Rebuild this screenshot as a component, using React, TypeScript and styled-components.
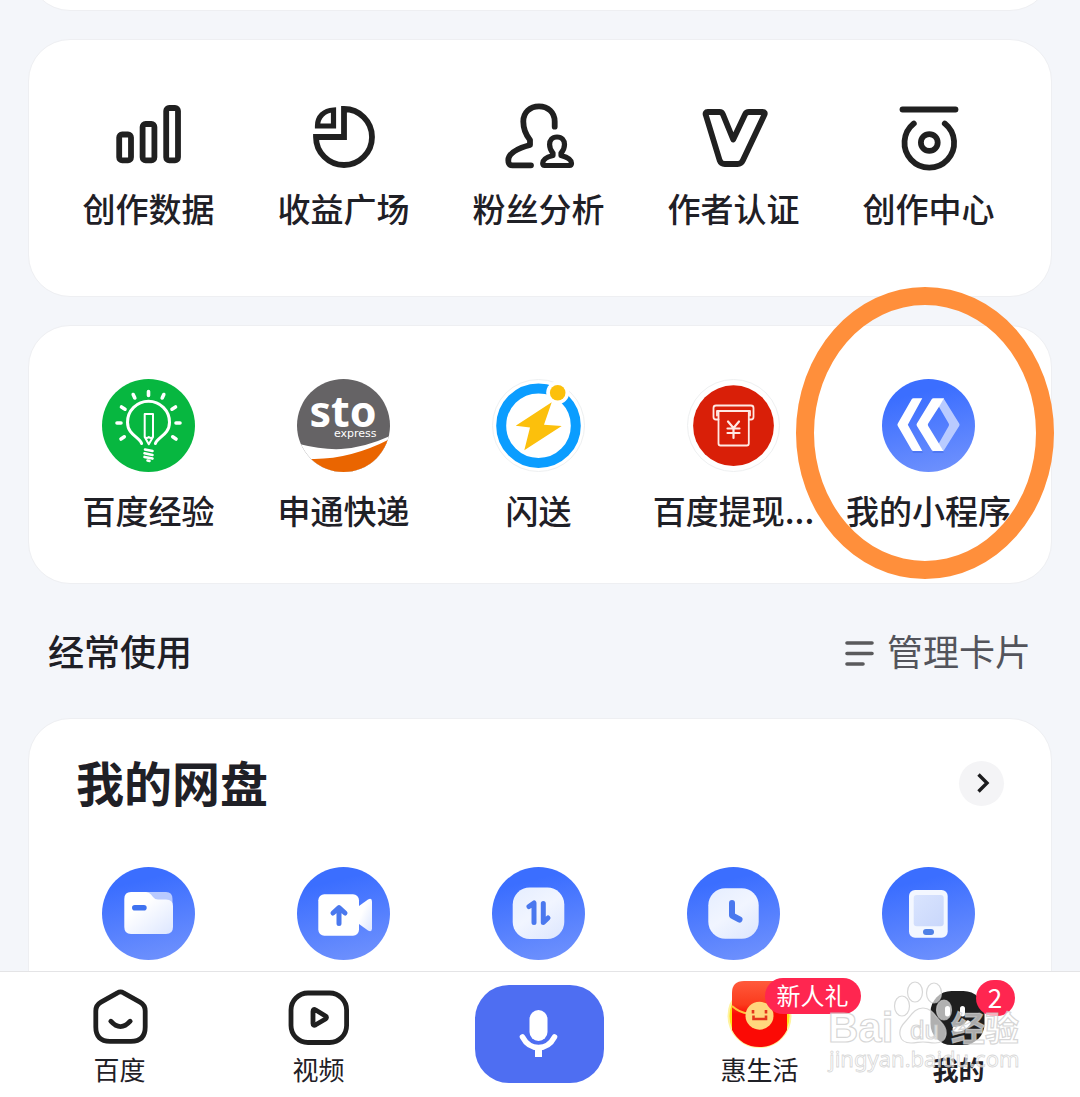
import React from "react";
import styled, { createGlobalStyle, css } from "styled-components";

const ink = "#1f2026";

const GlobalStyle = createGlobalStyle`
  * { box-sizing: border-box; }
  body {
    margin: 0;
    background: #f4f6fa;
    color: ${ink};
    font-family: "Noto Sans CJK SC", "Noto Sans", sans-serif;
  }
  button { font: inherit; color: inherit; border: 0; padding: 0; background: none; cursor: pointer; }
  a { color: inherit; text-decoration: none; }
  h2, h3 { margin: 0; }
  svg { display: block; overflow: visible; }
`;

const Screen = styled.div`
  display: flex;
  flex-direction: column;
  height: 100vh;
  overflow: hidden;
`;

const Feed = styled.main`
  flex: 1;
  min-height: 0;
  overflow: hidden;
  padding: 0 28px;
`;

const Card = styled.section<{ $pad?: string }>`
  background: #fff;
  border: 1px solid #eeeff2;
  border-radius: 42px;
  padding: ${(p) => p.$pad ?? "0"};
  margin-bottom: 28px;
`;

const ScrolledCard = styled(Card)`
  height: 100px;
  margin-top: -89px;
`;

const Grid = styled.div`
  display: grid;
  grid-template-columns: repeat(5, minmax(0, 1fr));
  padding: 0 25px 0 22px;
`;

const AppLink = styled.a<{ $gap: number }>`
  position: relative;
  display: flex;
  flex-direction: column;
  align-items: center;
  gap: ${(p) => p.$gap}px;
`;

const AppName = styled.span`
  font-size: 33px;
  line-height: 48px;
  font-weight: 500;
  white-space: nowrap;
`;

const Ring = styled.span`
  position: absolute;
  z-index: 2;
  top: -92px;
  left: calc(50% - 133px);
  width: 258px;
  height: 292px;
  border: 18px solid #ff8f3b;
  border-radius: 50%;
  pointer-events: none;
`;

const SectionBar = styled.header`
  display: flex;
  align-items: center;
  justify-content: space-between;
  height: 134px;
  margin-top: -28px;
  padding: 0 21px 2px 20px;
`;

const SectionTitle = styled.h2`
  font-size: 36px;
  line-height: 52px;
  font-weight: 500;
`;

const ManageButton = styled.button`
  display: flex;
  align-items: center;
  gap: 13px;
  font-size: 36px;
  line-height: 52px;
  color: #53545b;
`;

const DiskHead = styled.div`
  display: flex;
  align-items: center;
  justify-content: space-between;
  padding: 27px 47px 47px;
`;

const DiskTitle = styled.h3`
  padding-bottom: 4px;
  font-size: 48px;
  line-height: 70px;
  font-weight: 700;
`;

const MoreButton = styled.button`
  display: grid;
  place-items: center;
  width: 45px;
  height: 45px;
  border-radius: 50%;
  background: #f4f4f6;
`;

const TabBar = styled.nav`
  position: relative;
  display: grid;
  grid-template-columns: 1fr 1fr 242px 1fr 1fr;
  padding: 16px 22px 10px 20px;
  background: #fff;
  border-top: 1px solid #e4e4e6;
`;

const Tab = styled.a<{ $active?: boolean }>`
  display: flex;
  flex-direction: column;
  align-items: center;
  gap: 3px;
  font-size: 26px;
  line-height: 36px;
  ${(p) => p.$active && css`font-weight: 700;`}
`;

const TabIcon = styled.span`
  position: relative;
  width: 64px;
  height: 60px;
`;

const Badge = styled.span<{ $left: number; $top: number; $wide?: boolean }>`
  position: absolute;
  left: ${(p) => p.$left}px;
  top: ${(p) => p.$top}px;
  min-width: ${(p) => (p.$wide ? 96 : 39)}px;
  height: 36px;
  border-radius: 18px;
  background: #ff2650;
  color: #fff;
  font-size: ${(p) => (p.$wide ? 24 : 26)}px;
  line-height: 34px;
  font-weight: 400;
  text-align: center;
  white-space: nowrap;
`;

const VoiceButton = styled.button`
  justify-self: center;
  display: grid;
  place-items: center;
  width: 129px;
  height: 98px;
  margin-top: -3px;
  border-radius: 34px;
  background: #4e6ef2;
`;

const Watermark = styled.svg`
  position: absolute;
  right: 56px;
  bottom: 22px;
  pointer-events: none;
`;

const Line = ({ children }: { children: React.ReactNode }) => (
  <svg width="80" height="80" viewBox="0 0 80 80" fill="none" stroke="#202020" strokeWidth="5.8" strokeLinecap="round" aria-hidden="true">
    {children}
  </svg>
);

const Disc = ({ children, fill }: { children: React.ReactNode; fill: string }) => (
  <svg width="93" height="93" viewBox="0 0 93 93" fill="none" aria-hidden="true">
    <circle cx="46.5" cy="46.5" r="46.5" fill={fill} />
    {children}
  </svg>
);

const BLUE = "url(#discBlue)";
const SHEET = "url(#sheet)";

const Gradients = () => (
  <svg width="0" height="0" style={{ position: "absolute" }} aria-hidden="true">
    <defs>
      <linearGradient id="discBlue" x1="0.35" y1="0" x2="0.6" y2="1">
        <stop offset="0.15" stopColor="#3b6eff" />
        <stop offset="1" stopColor="#6d90fd" />
      </linearGradient>
      <linearGradient id="sheet" x1="0.1" y1="0" x2="1" y2="1">
        <stop offset="0.3" stopColor="#fff" />
        <stop offset="1" stopColor="#dce6ff" />
      </linearGradient>
      <linearGradient id="tile" x1="0.1" y1="0" x2="0.8" y2="1">
        <stop offset="0" stopColor="#e6eeff" />
        <stop offset="0.5" stopColor="#f1f5ff" />
        <stop offset="1" stopColor="#dfe8fe" />
      </linearGradient>
      <linearGradient id="screen" x1="0" y1="0" x2="1" y2="1">
        <stop offset="0" stopColor="#d9e4fe" />
        <stop offset="1" stopColor="#c9d7fb" />
      </linearGradient>
      <linearGradient id="packet" x1="0" y1="0" x2="0" y2="1">
        <stop offset="0" stopColor="#ff5a3c" />
        <stop offset="0.36" stopColor="#fb3a1c" />
        <stop offset="0.5" stopColor="#fb0a05" />
      </linearGradient>
      <clipPath id="round"><circle cx="46.5" cy="46.5" r="46.5" /></clipPath>
    </defs>
  </svg>
);

const tools = [
  {
    name: "创作数据",
    icon: (
      <Line>
        <rect x="10.2" y="36.5" width="11.8" height="25.8" rx="3" />
        <rect x="33.6" y="26" width="11.8" height="36.3" rx="3" />
        <rect x="57.2" y="10" width="11.8" height="52.3" rx="3" />
      </Line>
    ),
  },
  {
    name: "收益广场",
    icon: (
      <Line>
        <path strokeLinecap="butt" d="M40 11V39H12A28 28 0 1 0 40 11Z" />
        <path strokeLinecap="butt" strokeWidth="5.2" d="M29.5 12V28H13.5C13.5 19 20 12.2 29.5 12Z" />
      </Line>
    ),
  },
  {
    name: "粉丝分析",
    icon: (
      <Line>
        <path strokeLinejoin="round" d="M55.7 28.7V23.5C55.7 14.5 49 8.3 40 8.3S24.3 14.5 24.3 23.5C24.3 31 27 37 31 42V47C20 50 9.3 54.5 9.3 62.3C9.3 66 10.3 67.3 13.5 67.3H32" />
        <path strokeLinejoin="round" strokeWidth="5.2" d="M58 39C53 39 50.6 42.500 50.6 46.5C50.6 50 51.8 52.8 54 55V57.5C48 59 43.7 61.5 43.7 65.3C43.7 67 44.4 67.500 45.700 67.500H70.500C71.800 67.500 72.500 67 72.500 65.300C72.500 61.500 68 59 62 57.500V55C64.200 52.800 65.500 50 65.500 46.500C65.500 42.500 63 39 58 39Z" />
      </Line>
    ),
  },
  {
    name: "作者认证",
    icon: (
      <Line>
        <path strokeLinejoin="round" d="M13.800 14H25.500Q28 14 29 16.500L39.200 41.500L51 16.500Q52.200 14 55 14H68.500Q71.800 14 70.300 17L48.800 62.500Q47.200 66 43.500 66H30.800Q27 66 25.700 62.500L11.800 17Q10.800 14 13.800 14Z" />
      </Line>
    ),
  },
  {
    name: "创作中心",
    icon: (
      <Line>
        <path d="M13.500 11.500H66.500" />
        <path d="M24.800 25.500A24.800 24.800 0 1 0 55.800 25.500" />
        <circle cx="40.300" cy="44.500" r="8.400" />
      </Line>
    ),
  },
];

const apps = [
  {
    name: "百度经验",
    icon: (
      <Disc fill="#07b740">
        <g stroke="#fff" strokeLinecap="round">
          <path strokeWidth="3" d="M39.600 64.500C37.500 58 25.500 56 25.500 43.200A21 21 0 0 1 67.500 43.200C67.500 56 55.500 58 53.400 64.500" />
          <path strokeWidth="3.600" d="M46.500 12.500V16.500M31.200 15.500L32.800 19M61.800 15.500L60.200 19M19.500 28L23 30.200M73.500 28L70 30.200M15 44H19M74 44H78M19 60L22.300 57.800M74 60L70.700 57.800" />
          <path strokeWidth="2" strokeLinejoin="round" d="M42.700 35H51V58L46.800 65.300L42.700 58ZM42.700 58Q44.800 60 46.800 58Q49 60 51 58" />
          <path strokeWidth="2.600" d="M43 70.500L50.500 72M42.500 74.200L50.500 75.900M42.500 77.900L50.500 79.600M45.500 81.600L47.500 82" />
        </g>
      </Disc>
    ),
  },
  {
    name: "申通快递",
    icon: (
      <Disc fill="#656365">
        <g clipPath="url(#round)">
          <path fill="#fff" d="M0 64.500Q26 71 44 70Q68 68.500 93 57V93H0Z" />
          <path fill="#ea6500" d="M10 79.700Q50 82 93 60V93H10Z" />
        </g>
        <text x="12.500" y="48" fontFamily="Noto Sans, sans-serif" fontWeight="700" fontSize="43" fill="#fff">sto</text>
        <text x="37" y="58" fontFamily="DejaVu Sans, sans-serif" fontSize="11" fill="#fff">express</text>
      </Disc>
    ),
  },
  {
    name: "闪送",
    icon: (
      <Disc fill="#fff">
        <circle cx="46.500" cy="46.500" r="46" stroke="#eef0f1" />
        <circle cx="46.500" cy="46.700" r="37.300" stroke="#0b9dff" strokeWidth="10" />
        <circle cx="65.700" cy="13.700" r="11.500" fill="#fff" />
        <circle cx="65.700" cy="13.700" r="7.800" fill="#fcc00c" />
        <path fill="#fcc00c" d="M59.700 23.300L23.700 46.700L38 48.500L32.300 71.300L69.700 47L52 45.800Z" />
      </Disc>
    ),
  },
  {
    name: "百度提现...",
    icon: (
      <Disc fill="#fff">
        <circle cx="46.500" cy="46.500" r="46" stroke="#eef0f1" />
        <circle cx="46.500" cy="46.700" r="40.400" fill="#d91f08" />
        <g stroke="#ffe9e4" strokeWidth="1.800" strokeLinejoin="round" strokeLinecap="round">
          <path d="M31.500 40.500H29Q26.500 40.500 26.500 38V29Q26.500 26.500 29 26.500H64Q66.500 26.500 66.500 29V38Q66.500 40.500 64 40.500H61.800" />
          <path d="M30 36.500V32H63V36.500" />
          <path d="M31.500 33V64.500Q31.500 66.500 33.500 66.500H59.800Q61.800 66.500 61.800 64.500V33" />
          <path strokeWidth="2.200" d="M41 42.500L46.500 49L52 42.500M46.500 49V59M40.500 49.500H52.500M40.500 54H52.500" />
        </g>
      </Disc>
    ),
  },
  {
    name: "我的小程序",
    marked: true,
    icon: (
      <Disc fill={BLUE}>
        <path fill="#2f5de0" fillOpacity="0.35" d="M31 74H41L38 68L28 66ZM50 74H62L57 67Z" />
        <path fill="#fff" d="M31.500 19.300H40.300L25.800 45.700L40.300 72H31.500Q30.300 72 29.700 71L15.800 47Q15 45.700 15.800 44.400L29.700 20.300Q30.300 19.300 31.500 19.300Z" />
        <path fill="#b9cbff" d="M61.500 19.300L77.200 44.400Q78 45.700 77.200 47L61.500 72L56.500 65L66.700 47Q67.400 45.700 66.700 44.400L56.500 27Z" />
        <path fill="#fff" d="M51.500 19.300H62L57.500 27L46.200 44.400Q45.400 45.700 46.200 47L61.500 72H51.500Q50.300 72 49.700 71L34.900 47Q34.100 45.700 34.900 44.400L49.700 20.300Q50.300 19.300 51.500 19.300Z" />
      </Disc>
    ),
  },
];

const diskTools = [
  {
    name: "文件",
    icon: (
      <Disc fill={BLUE}>
        <path fill="#b9caff" d="M44 25H64Q70.500 25 70.500 32V42H44Z" />
        <path fill={SHEET} d="M29 25H44Q47 25 49 27.500L51 30Q53 32.500 56 32.500H64Q71 32.500 71 39V60Q71 67 64 67H29Q22.300 67 22.300 60V32Q22.300 25 29 25Z" />
        <rect x="30" y="38" width="14.700" height="5.600" rx="2.800" fill="#3f72f0" />
      </Disc>
    ),
  },
  {
    name: "上传视频",
    icon: (
      <Disc fill={BLUE}>
        <path fill={SHEET} d="M62 39L71 32.500Q75 30.500 75 34.500V61.500Q75 65.500 71 63.500L62 57Z" />
        <rect x="21.300" y="27.300" width="40.700" height="41.400" rx="6" fill="#fff" />
        <path stroke="#4a78ee" strokeWidth="5" strokeLinecap="round" strokeLinejoin="round" d="M42 56.500V41.500M36 46L42 40.500L48 46" />
      </Disc>
    ),
  },
  {
    name: "传输",
    icon: (
      <Disc fill={BLUE}>
        <rect x="20.700" y="20.500" width="51.600" height="51.600" rx="17" fill="url(#tile)" />
        <path stroke="#4a78ee" strokeWidth="5" strokeLinecap="round" strokeLinejoin="round" d="M37 39.500L42 36V55.500M51.300 36.500V55.500L56 51" />
      </Disc>
    ),
  },
  {
    name: "最近",
    icon: (
      <Disc fill={BLUE}>
        <rect x="21.300" y="21.300" width="50.400" height="50.400" rx="17" fill="url(#tile)" />
        <path stroke="#4a78ee" strokeWidth="6" strokeLinecap="round" strokeLinejoin="round" d="M45 36V48.500L52.500 52.500" />
      </Disc>
    ),
  },
  {
    name: "手机备份",
    icon: (
      <Disc fill={BLUE}>
        <rect x="27" y="23" width="38.700" height="47.700" rx="6" fill="#f3f7ff" />
        <rect x="31.700" y="28" width="30" height="31.300" rx="3" fill="url(#screen)" />
        <rect x="41" y="62" width="11" height="6" rx="3" fill="#4f80e6" />
      </Disc>
    ),
  },
];

export default function App() {
  return (
    <Screen>
      <GlobalStyle />
      <Gradients />
      <Feed>
        <ScrolledCard />
        <Card $pad="58px 0 64px">
          <Grid>
            {tools.map((t) => (
              <AppLink href="#" key={t.name} $gap={6}>
                {t.icon}
                <AppName>{t.name}</AppName>
              </AppLink>
            ))}
          </Grid>
        </Card>
        <Card $pad="53px 0 49px">
          <Grid>
            {apps.map((a) => (
              <AppLink href="#" key={a.name} $gap={14}>
                {a.icon}
                <AppName>{a.name}</AppName>
                {a.marked && <Ring />}
              </AppLink>
            ))}
          </Grid>
        </Card>
        <SectionBar>
          <SectionTitle>经常使用</SectionTitle>
          <ManageButton>
            <svg width="29" height="36" viewBox="0 -8 29 36" stroke="#5a5a5c" strokeWidth="3.600" strokeLinecap="round" aria-hidden="true">
              <path d="M2 3H27M2 13.500H27M2 24H18" />
            </svg>
            管理卡片
          </ManageButton>
        </SectionBar>
        <Card $pad="0 0 60px">
          <DiskHead>
            <DiskTitle>我的网盘</DiskTitle>
            <MoreButton aria-label="更多">
              <svg width="20" height="24" viewBox="0 0 20 24" fill="none" stroke="#1c1c1e" strokeWidth="3.400" aria-hidden="true">
                <path d="M6.500 3.500L15 12L6.500 20.500" />
              </svg>
            </MoreButton>
          </DiskHead>
          <Grid>
            {diskTools.map((d) => (
              <AppLink href="#" key={d.name} aria-label={d.name} $gap={0}>
                {d.icon}
              </AppLink>
            ))}
          </Grid>
        </Card>
      </Feed>

      <TabBar>
        <Tab href="#">
          <TabIcon>
            <svg width="64" height="60" viewBox="0 0 64 60" fill="none" stroke="#1f1f1f" strokeWidth="4.800" strokeLinecap="round" strokeLinejoin="round" aria-hidden="true">
              <path d="M29.500 4.800Q32.500 3 35.500 4.800L52 14.200Q57.200 17.200 57.200 23V39Q57.200 53.300 43 53.300H22Q7.800 53.300 7.800 39V23Q7.800 17.200 13 14.200Z" />
              <path d="M22.800 33.200Q32.500 44 42.200 33.200" />
            </svg>
          </TabIcon>
          百度
        </Tab>
        <Tab href="#">
          <TabIcon>
            <svg width="64" height="60" viewBox="0 0 64 60" fill="none" stroke="#1f1f1f" strokeWidth="4.800" strokeLinejoin="round" aria-hidden="true">
              <rect x="4" y="5" width="55.600" height="49.500" rx="17" />
              <path d="M26 23.500Q26 20.500 28.700 22L38.500 28Q40.500 29.500 38.500 31L28.700 36.800Q26 38.200 26 35.500Z" />
            </svg>
          </TabIcon>
          视频
        </Tab>
        <VoiceButton aria-label="语音搜索">
          <svg width="40" height="50" viewBox="0 0 40 50" fill="none" stroke="#fff" strokeWidth="5.600" strokeLinecap="round" aria-hidden="true">
            <rect x="10.500" y="1" width="18" height="31" rx="9" fill="#fff" stroke="none" />
            <path d="M3.500 28Q9 38.500 19.500 38.500T35.500 28" />
            <path strokeWidth="7" strokeLinecap="butt" d="M19.500 38V48" />
          </svg>
        </VoiceButton>
        <Tab href="#">
          <TabIcon>
            <svg width="64" height="60" viewBox="0 0 64 60" fill="none" aria-hidden="true">
              <circle cx="31.500" cy="28" r="31" fill="#ffe21a" stroke="#fff3a0" strokeWidth="2" />
              <path fill="url(#packet)" d="M16 -7H47Q59 -7 59 5V42Q50 59 31.500 59Q13 59 4 42V5Q4 -7 16 -7Z" />
              <path stroke="#ffc23c" strokeWidth="2" d="M4 18Q12 25 20 25.500" />
              <circle cx="31.500" cy="27.700" r="14" fill="#ffd67d" />
              <path stroke="#e5341c" strokeWidth="2.600" d="M25 22V25.500M38 22V25.500M25.500 27.500V31H38V27.500" />
            </svg>
            <Badge $left={37} $top={-10} $wide>新人礼</Badge>
          </TabIcon>
          惠生活
        </Tab>
        <Tab href="#" $active>
          <TabIcon>
            <svg width="64" height="60" viewBox="0 0 64 60" fill="none" aria-hidden="true">
              <rect x="3.500" y="3" width="54" height="54" rx="21" fill="#1f1f1f" />
              <path stroke="#fff" strokeWidth="5" strokeLinecap="round" d="M20.500 20.500V26M35.500 20.500V26M28 41Q36 42 41 35" />
            </svg>
            <Badge $left={49} $top={-8}>2</Badge>
          </TabIcon>
          我的
        </Tab>
        <Watermark width="196" height="98" viewBox="0 0 196 98" fill="#fff" fillOpacity="0.65" stroke="#c9c9c9" strokeOpacity="0.75" strokeWidth="1.200" aria-hidden="true">
          <ellipse cx="87" cy="15" rx="7.500" ry="10" />
          <ellipse cx="106" cy="16" rx="7.500" ry="10" />
          <ellipse cx="74" cy="29" rx="7.500" ry="10" />
          <ellipse cx="116" cy="33" rx="7.500" ry="10" />
          <path d="M95 31C104 31 107 39 113 45C121 53 120 66 107 66C102 66 99 65 95 65C91 65 88 66 83 66C70 66 69 53 77 45C83 39 86 31 95 31Z" />
          <text x="0" y="65" fontFamily="Liberation Sans, sans-serif" fontWeight="700" fontSize="42">Bai</text>
          <text x="82" y="62" fontFamily="Liberation Sans, sans-serif" fontWeight="400" fontSize="26">du</text>
          <text x="123" y="64" fontFamily="Noto Sans CJK SC, sans-serif" fontWeight="700" fontSize="34">经验</text>
          <text x="1" y="90" fontFamily="Noto Sans, sans-serif" fontSize="22" strokeWidth="0.800">jingyan.baidu.com</text>
        </Watermark>
      </TabBar>
    </Screen>
  );
}
